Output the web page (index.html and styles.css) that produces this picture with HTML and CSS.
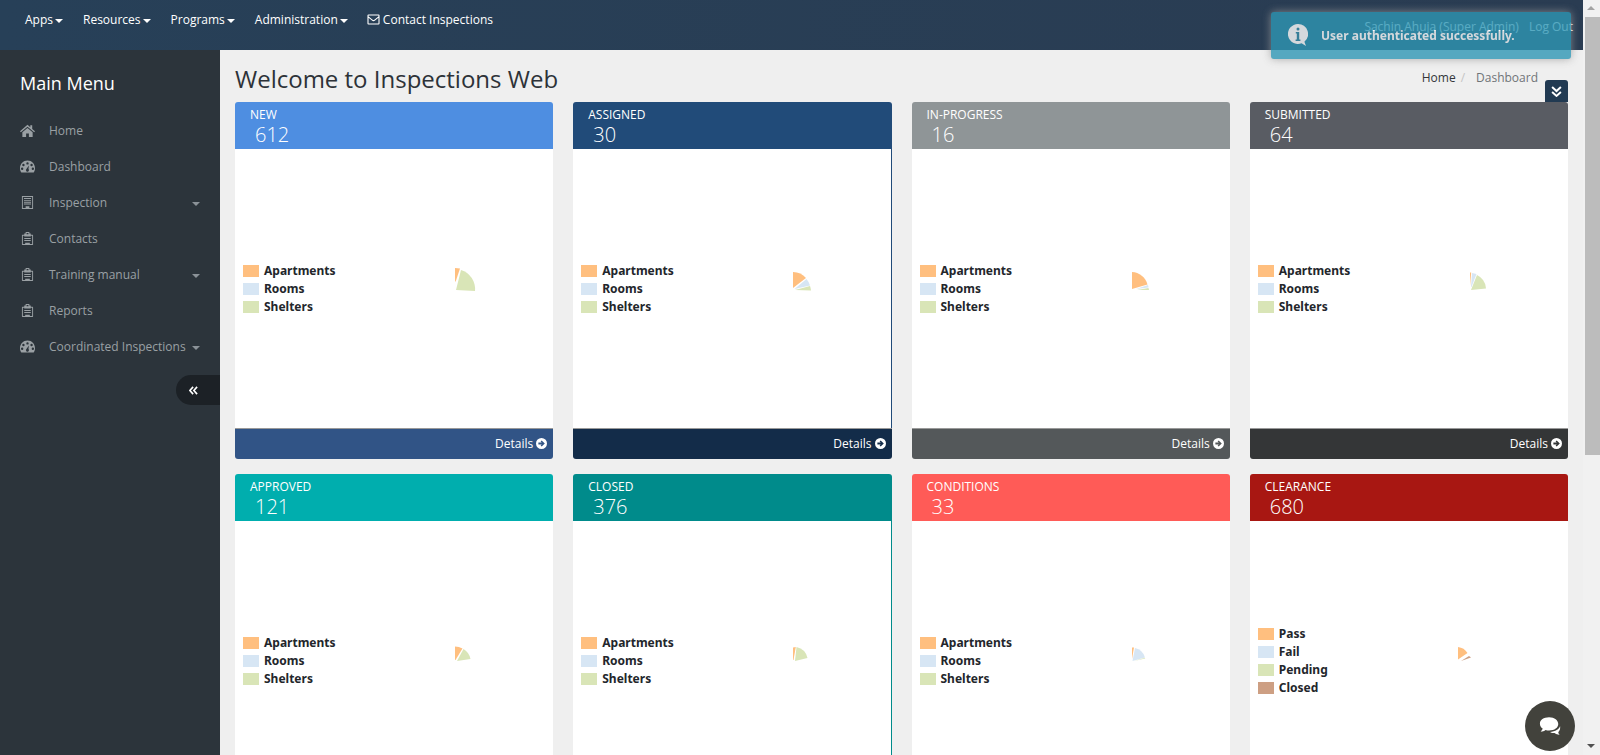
FILE: index.html
```html
<!DOCTYPE html>
<html>
	<head>
		<meta charset="UTF-8">
		<title>Inspections Web</title>
		<link rel="stylesheet" href="styles.css">
	</head>
	<body>
		<svg class="defs" width="0" height="0">
			<symbol id="i-home" viewBox="0 0 14 12"><path d="M7 0.6 9.6 2.9V1.2h1.8v3.3L14 6.8l-.8.9L7 2.4.8 7.7 0 6.8zM2.2 7.6 7 3.6l4.8 4V12H8.3V8.8H5.7V12H2.200z"/></symbol>
			<symbol id="i-gauge" viewBox="0 0 14 12"><path fill-rule="evenodd" d="M7 .5C3.100.5 0 3.700 0 7.600c0 1.500.4 2.900 1.200 3.900h11.600c.8-1 1.200-2.400 1.200-3.900C14 3.700 10.900.5 7 .500zM7 2a1.100 1.100 0 1 1 0 2.200A1.100 1.100 0 0 1 7 2zM3.200 3.500a1.100 1.100 0 1 1 0 2.200 1.100 1.100 0 0 1 0-2.200zm7.600 0a1.100 1.100 0 1 1 0 2.200 1.100 1.100 0 0 1 0-2.200zM2 7a1.100 1.100 0 1 1 0 2.200A1.100 1.100 0 0 1 2 7zm10 0a1.100 1.100 0 1 1 0 2.200A1.100 1.100 0 0 1 12 7zM8.300 5 7.900 8.400a1.400 1.400 0 1 1-1.900 0z"/></symbol>
			<symbol id="i-building" viewBox="0 0 12 14"><path fill-rule="evenodd" d="M0 0h12v14H0zM1 1v12h3v-2h4v2h3V1zM2.200 2.200h7.600v1H2.200zm0 2h7.600v1H2.200zm0 2h7.600v1H2.200zm0 2h7.600v1H2.200z"/></symbol>
			<symbol id="i-clip" viewBox="0 0 12 14"><path fill-rule="evenodd" d="M4 0h4v1.500h1.500V3H11.500c.3 0 .5.200.5.500v10c0 .3-.2.500-.5.500H.5c-.3 0-.5-.2-.5-.5v-10C0 3.200.2 3 .5 3H2.500V1.500H4zM5 1v1.500h2V1zM1 4v9h2.500v-1.500h5V13H11V4H9.500v.9h-7V4zM2.500 6.500h7v1h-7zm0 2.200h7v1h-7z"/></symbol>
			<symbol id="i-go" viewBox="0 0 12 12"><path fill-rule="evenodd" d="M6 0a6 6 0 1 1 0 12A6 6 0 0 1 6 0zM6.200 2.600 5 3.800 6.300 5H2.600v2h3.700L5 8.200l1.200 1.200L9.600 6z"/></symbol>
		</svg>
		<div class="page">
			<div class="app">
				<div class="topbar">
					<ul class="nav">
						<li>Apps<i class="caret"></i></li>
						<li>Resources<i class="caret"></i></li>
						<li>Programs<i class="caret"></i></li>
						<li>Administration<i class="caret"></i></li>
						<li class="nav-contact">
							<svg class="mail" viewBox="0 0 13 11"><path fill="none" stroke="currentColor" stroke-width="1.100" d="M1.500 1h10c.3 0 .5.200.5.500v8c0 .3-.2.500-.5.500h-10c-.3 0-.5-.2-.5-.5v-8c0-.3.200-.5.500-.5zM1 2.600l4.300 3.500c.7.600 1.700.6 2.400 0L12 2.600"/></svg>
							Contact Inspections
						</li>
					</ul>
					<div class="user">
						<span>Sachin Ahuja (Super Admin)</span>
						<span>Log Out</span>
					</div>
				</div>
				<div class="wrap">
					<div class="sidebar">
						<h2>Main Menu</h2>
						<ul class="menu">
							<li><svg class="ico"><use href="#i-home"/></svg>Home</li>
							<li><svg class="ico"><use href="#i-gauge"/></svg>Dashboard</li>
							<li><svg class="ico"><use href="#i-building"/></svg>Inspection<i class="caret"></i></li>
							<li><svg class="ico"><use href="#i-clip"/></svg>Contacts</li>
							<li><svg class="ico"><use href="#i-clip"/></svg>Training manual<i class="caret"></i></li>
							<li><svg class="ico"><use href="#i-clip"/></svg>Reports</li>
							<li><svg class="ico"><use href="#i-gauge"/></svg>Coordinated Inspections<i class="caret"></i></li>
						</ul>
						<div class="collapse">
							<svg viewBox="0 0 10 10"><path fill="none" stroke="currentColor" stroke-width="1.800" d="M4.600 1 1 5l3.600 4M9 1 5.400 5 9 9"/></svg>
						</div>
					</div>
					<div class="main">
						<div class="title-row">
							<h1>Welcome to Inspections Web</h1>
							<div class="crumbs"><span class="c-home">Home</span><span class="c-sep">/</span><span>Dashboard</span></div>
							<div class="expand">
								<svg viewBox="0 0 10 10"><path fill="none" stroke="currentColor" stroke-width="1.800" d="M1 1l4 3.600L9 1M1 5.400 5 9l4-3.600"/></svg>
							</div>
						</div>
						<div class="cards">

							<div class="card new">
								<div class="head"><div class="name">NEW</div><div class="num">612</div></div>
								<div class="body">
									<ul class="legend">
										<li><i class="sw orange"></i>Apartments</li>
										<li><i class="sw blue"></i>Rooms</li>
										<li><i class="sw green"></i>Shelters</li>
									</ul>
									<svg class="pie" viewBox="-30 -30 60 60">
										<path class="orange" d="M0-8V-21A21 21 0 0 1 5-20.400L.5-7z"/>
										<path class="green" d="M1 1 6-19A20 20 0 0 1 20 2z"/>
									</svg>
								</div>
								<div class="foot">Details <svg><use href="#i-go"/></svg></div>
							</div>

							<div class="card assigned">
								<div class="head"><div class="name">ASSIGNED</div><div class="num">30</div></div>
								<div class="body">
									<ul class="legend">
										<li><i class="sw orange"></i>Apartments</li>
										<li><i class="sw blue"></i>Rooms</li>
										<li><i class="sw green"></i>Shelters</li>
									</ul>
									<svg class="pie" viewBox="-30 -30 60 60">
										<path class="orange" d="M0-1V-17A17 17 0 0 1 13-11z"/>
										<path class="blue" d="M1.500 0 13.500-10A17 17 0 0 1 17-3.500z"/>
										<path class="green" d="M2 1 17-3A17 17 0 0 1 18 1.500z"/>
									</svg>
								</div>
								<div class="foot">Details <svg><use href="#i-go"/></svg></div>
							</div>

							<div class="card progress">
								<div class="head"><div class="name">IN-PROGRESS</div><div class="num">16</div></div>
								<div class="body">
									<ul class="legend">
										<li><i class="sw orange"></i>Apartments</li>
										<li><i class="sw blue"></i>Rooms</li>
										<li><i class="sw green"></i>Shelters</li>
									</ul>
									<svg class="pie" viewBox="-30 -30 60 60">
										<path class="orange" d="M0 0V-17A17 17 0 0 1 15.500-4.500z"/>
										<path class="blue" d="M4 0 16-4A17 17 0 0 1 16.500-1.500z"/>
										<path class="green" d="M5 1 16.500-1A17 17 0 0 1 17 1z"/>
									</svg>
								</div>
								<div class="foot">Details <svg><use href="#i-go"/></svg></div>
							</div>

							<div class="card submitted">
								<div class="head"><div class="name">SUBMITTED</div><div class="num">64</div></div>
								<div class="body">
									<ul class="legend">
										<li><i class="sw orange"></i>Apartments</li>
										<li><i class="sw blue"></i>Rooms</li>
										<li><i class="sw green"></i>Shelters</li>
									</ul>
									<svg class="pie" viewBox="-30 -30 60 60">
										<path class="orange" d="M0-3V-16.500L1.200-16.500z"/>
										<path class="blue" d="M1-2 2-16 6.500-15 1.500-2z"/>
										<path class="green" d="M1 1 7-14A16 16 0 0 1 16-.5z"/>
									</svg>
								</div>
								<div class="foot">Details <svg><use href="#i-go"/></svg></div>
							</div>

							<div class="card approved">
								<div class="head"><div class="name">APPROVED</div><div class="num">121</div></div>
								<div class="body">
									<ul class="legend">
										<li><i class="sw orange"></i>Apartments</li>
										<li><i class="sw blue"></i>Rooms</li>
										<li><i class="sw green"></i>Shelters</li>
									</ul>
									<svg class="pie" viewBox="-30 -30 60 60">
										<path class="orange" d="M0-1V-14.500A15 15 0 0 1 7.500-12.500L.5-1z"/>
										<path class="green" d="M2 0 8.500-12A15 15 0 0 1 15.500-2z"/>
									</svg>
								</div>
								<div class="foot">Details <svg><use href="#i-go"/></svg></div>
							</div>

							<div class="card closed">
								<div class="head"><div class="name">CLOSED</div><div class="num">376</div></div>
								<div class="body">
									<ul class="legend">
										<li><i class="sw orange"></i>Apartments</li>
										<li><i class="sw blue"></i>Rooms</li>
										<li><i class="sw green"></i>Shelters</li>
									</ul>
									<svg class="pie" viewBox="-30 -30 60 60">
										<path class="orange" d="M0-1V-13.500L2.800-14 .5-1z"/>
										<path class="green" d="M2 0 3.500-14A14.500 14.500 0 0 1 14.500-3z"/>
									</svg>
								</div>
								<div class="foot">Details <svg><use href="#i-go"/></svg></div>
							</div>

							<div class="card conditions">
								<div class="head"><div class="name">CONDITIONS</div><div class="num">33</div></div>
								<div class="body">
									<ul class="legend">
										<li><i class="sw orange"></i>Apartments</li>
										<li><i class="sw blue"></i>Rooms</li>
										<li><i class="sw green"></i>Shelters</li>
									</ul>
									<svg class="pie" viewBox="-30 -30 60 60">
										<path class="orange" d="M0-2V-13.500L2-13.500z"/>
										<path class="blue" d="M.5 0 3-13A13.500 13.500 0 0 1 13-3.500z"/>
										<path class="green" d="M2 0 13-3.200 13.200-2.500z"/>
									</svg>
								</div>
								<div class="foot">Details <svg><use href="#i-go"/></svg></div>
							</div>

							<div class="card clearance">
								<div class="head"><div class="name">CLEARANCE</div><div class="num">680</div></div>
								<div class="body">
									<ul class="legend">
										<li><i class="sw orange"></i>Pass</li>
										<li><i class="sw blue"></i>Fail</li>
										<li><i class="sw green"></i>Pending</li>
										<li><i class="sw brown"></i>Closed</li>
									</ul>
									<svg class="pie" viewBox="-30 -30 60 60">
										<path class="orange" d="M-12-1V-14A13 13 0 0 1-2.500-8L-12-1.500z"/>
										<path class="brown" d="M-9 0-1-5A13 13 0 0 1 1-3.500z"/>
									</svg>
								</div>
								<div class="foot">Details <svg><use href="#i-go"/></svg></div>
							</div>

						</div>
					</div>
				</div>
			</div>
			<div class="scrollbar">
				<i class="up"></i>
				<div class="thumb"></div>
				<i class="down"></i>
			</div>
		</div>

		<div class="toast">
			<svg class="toast-ico" viewBox="0 0 20 22">
				<path d="M10 0a10 10 0 1 0 3.600 19.300L18 22l-1.600-4.300A10 10 0 0 0 10 0z"/>
				<circle class="dot" cx="10" cy="5" r="1.500"/>
				<path class="dot" d="M7.800 8h3.400v7.500h1.200V17H7.600v-1.500h1.200V9.500h-1z"/>
			</svg>
			User authenticated successfully.
		</div>

		<div class="chat">
			<svg viewBox="0 0 24 20">
				<path d="M11 0C5 0 1 3 1 7c0 2.200 1.200 4 3 5.300-.2 1.200-1 2.400-2.200 3.300 2 0 4-.7 5.400-1.800 1.200.4 2.500.6 3.800.6 6 0 10-3.200 10-7.100S17 0 11 0z"/>
				<path d="M23 9.500c-1 3.600-5.200 6.200-11 6.400 1.500 1 3.300 1.400 5 1.300 1.500 1 3.300 1.800 5.500 2-.8-.9-1.300-2-1.500-3 1.500-1.200 2.500-3.700 2-6.700z"/>
			</svg>
		</div>
	</body>
</html>
```

FILE: styles.css
```css
html, body{
	margin: 0;
	height: 755px;
	overflow: hidden;
	font-family: "Open Sans", sans-serif;
	font-size: 12px;
	background: #efefef;
}
ul{
	list-style: none;
	margin: 0;
	padding: 0;
}
.defs{
	position: absolute;
}
.page{
	display: flex;
	height: 755px;
}
.app{
	flex: 1;
	min-width: 0;
	display: flex;
	flex-direction: column;
}

/* top bar */
.topbar{
	height: 50px;
	flex: none;
	display: flex;
	justify-content: space-between;
	background: linear-gradient(90deg, #274058, #2a3c52);
	color: #fff;
}
.nav{
	display: flex;
	gap: 20px;
	padding: 11px 0 0 25px;
	font-size: 12px;
	line-height: 17px;
}
.nav .caret{
	border-top-color: #fff;
	margin-left: 2px;
}
.nav-contact{
	margin-left: -1px;
}
.caret{
	display: inline-block;
	width: 0;
	height: 0;
	border-left: 4px solid transparent;
	border-right: 4px solid transparent;
	border-top: 4px solid #8b9298;
	vertical-align: middle;
}
.mail{
	width: 13px;
	height: 11px;
	vertical-align: -1px;
}
.user{
	display: flex;
	gap: 10px;
	padding: 18px 10px 0 0;
	font-size: 12px;
	line-height: 17px;
}

.wrap{
	flex: 1;
	display: flex;
	min-height: 0;
}

/* left menu */
.sidebar{
	width: 220px;
	flex: none;
	background: #2c343b;
	position: relative;
}
.sidebar h2{
	margin: 21px 0 0 20px;
	font-size: 18px;
	line-height: 24px;
	font-weight: 400;
	color: #fff;
}
.menu{
	margin-top: 17px;
	color: #9aa0a4;
	font-size: 12px;
}
.menu li{
	height: 36px;
	display: flex;
	align-items: center;
	padding: 0 20px;
}
.menu .ico{
	width: 15px;
	height: 13px;
	margin-right: 14px;
	fill: #9aa0a4;
	flex: none;
}
.menu .caret{
	margin: 3px 0 0 auto;
}
.collapse{
	position: absolute;
	right: 0;
	top: 325px;
	width: 44px;
	height: 30px;
	border-radius: 15px 0 0 15px;
	background: #1c2126;
	color: #fff;
	display: flex;
	align-items: center;
	padding-left: 13px;
	box-sizing: border-box;
}
.collapse svg{
	width: 9px;
	height: 9px;
}

/* content */
.main{
	flex: 1;
	min-width: 0;
	padding: 0 15px;
	overflow: hidden;
}
.title-row{
	height: 52px;
	display: flex;
	justify-content: space-between;
	position: relative;
}
.title-row h1{
	margin: 12px 0 0;
	font-size: 24px;
	line-height: 34px;
	font-weight: 400;
	color: #2d3238;
}
.crumbs{
	display: flex;
	padding: 19px 30px 0 0;
	font-size: 12px;
	line-height: 18px;
	color: #6f7478;
}
.c-home{
	color: #33363a;
}
.c-sep{
	color: #c4c4c4;
	padding: 0 9px 0 5px;
	margin-right: 2px;
}
.expand{
	position: absolute;
	right: 0;
	top: 30px;
	width: 23px;
	height: 22px;
	border-radius: 3px 3px 0 0;
	background: #213a52;
	color: #fff;
	display: flex;
	align-items: center;
	justify-content: center;
}
.expand svg{
	width: 11px;
	height: 11px;
}

/* cards */
.cards{
	display: grid;
	grid-template-columns: repeat(4, 1fr);
	gap: 15px 20px;
}
.card .head{
	height: 47px;
	box-sizing: border-box;
	padding: 4px 15px 0;
	border-radius: 3px 3px 0 0;
	color: #fff;
}
.name{
	font-size: 12px;
	line-height: 17px;
}
.num{
	font-size: 20px;
	line-height: 24px;
	font-weight: 300;
	padding-left: 5px;
}
.body{
	height: 279px;
	background: #fff;
	display: flex;
	align-items: center;
	box-sizing: border-box;
	padding-left: 8px;
}
.legend{
	width: 182px;
	flex: none;
	font-family: "Noto Sans", sans-serif;
	font-size: 12px;
	font-weight: 700;
	color: #23262b;
}
.legend li{
	height: 18px;
	display: flex;
	align-items: center;
}
.sw{
	width: 16px;
	height: 12px;
	margin-right: 5px;
}
.pie{
	width: 60px;
	height: 60px;
	flex: none;
}
.orange{
	background: #ffbf7f;
	fill: #ffbf7f;
}
.blue{
	background: #d7e6f4;
	fill: #d7e6f4;
}
.green{
	background: #d9e5b7;
	fill: #d9e5b7;
}
.brown{
	background: #cd9f83;
	fill: #cd9f83;
}
.foot{
	height: 31px;
	box-sizing: border-box;
	border-top: 1px solid #999;
	border-radius: 0 0 3px 3px;
	color: #fff;
	display: flex;
	align-items: center;
	justify-content: flex-end;
	gap: 3px;
	padding: 0 6px 2px 0;
	font-size: 12px;
}
.foot svg{
	width: 11px;
	height: 11px;
	fill: #fff;
}

.new .head{ background: #4e8ee1; }
.new .foot{ background: #315486; }
.assigned .head{ background: #214b79; }
.assigned .foot{ background: #132c49; }
.assigned .body{ border-right: 1px solid #214b79; }
.progress .head{ background: #8f9597; }
.progress .foot{ background: #54585a; }
.submitted .head{ background: #595c63; }
.submitted .foot{ background: #343637; }
.approved .head{ background: #00aeae; }
.closed .head{ background: #008b8b; }
.closed .body{ border-right: 1px solid #008b8b; }
.conditions .head{ background: #ff5b57; }
.clearance .head{ background: #a81712; }

/* browser scrollbar */
.scrollbar{
	width: 17px;
	flex: none;
	background: #f1f1f1;
	position: relative;
}
.thumb{
	position: absolute;
	left: 2px;
	right: 0;
	top: 17px;
	height: 438px;
	background: #bcbcbc;
}
.up, .down{
	position: absolute;
	left: 4px;
	width: 0;
	height: 0;
	border-left: 4px solid transparent;
	border-right: 4px solid transparent;
}
.up{
	top: 6px;
	border-bottom: 4px solid #a3a3a3;
}
.down{
	bottom: 7px;
	border-top: 4px solid #505050;
}

/* overlays */
.toast{
	position: fixed;
	left: 1271px;
	top: 12px;
	width: 300px;
	height: 47px;
	box-sizing: border-box;
	border-radius: 3px;
	background: #2f96b4;
	opacity: .8;
	box-shadow: 0 0 8px #999;
	color: #fff;
	font-family: "Noto Sans", sans-serif;
	font-size: 12px;
	font-weight: 700;
	display: flex;
	align-items: center;
	padding-left: 50px;
}
.toast-ico{
	position: absolute;
	left: 17px;
	top: 12px;
	width: 20px;
	height: 22px;
	fill: #fff;
}
.toast-ico .dot{
	fill: #3a8fab;
}
.chat{
	position: fixed;
	left: 1525px;
	top: 701px;
	width: 50px;
	height: 50px;
	border-radius: 50%;
	background: #42423c;
	display: flex;
	align-items: center;
	justify-content: center;
}
.chat svg{
	width: 22px;
	height: 19px;
	fill: #fff;
}
```
